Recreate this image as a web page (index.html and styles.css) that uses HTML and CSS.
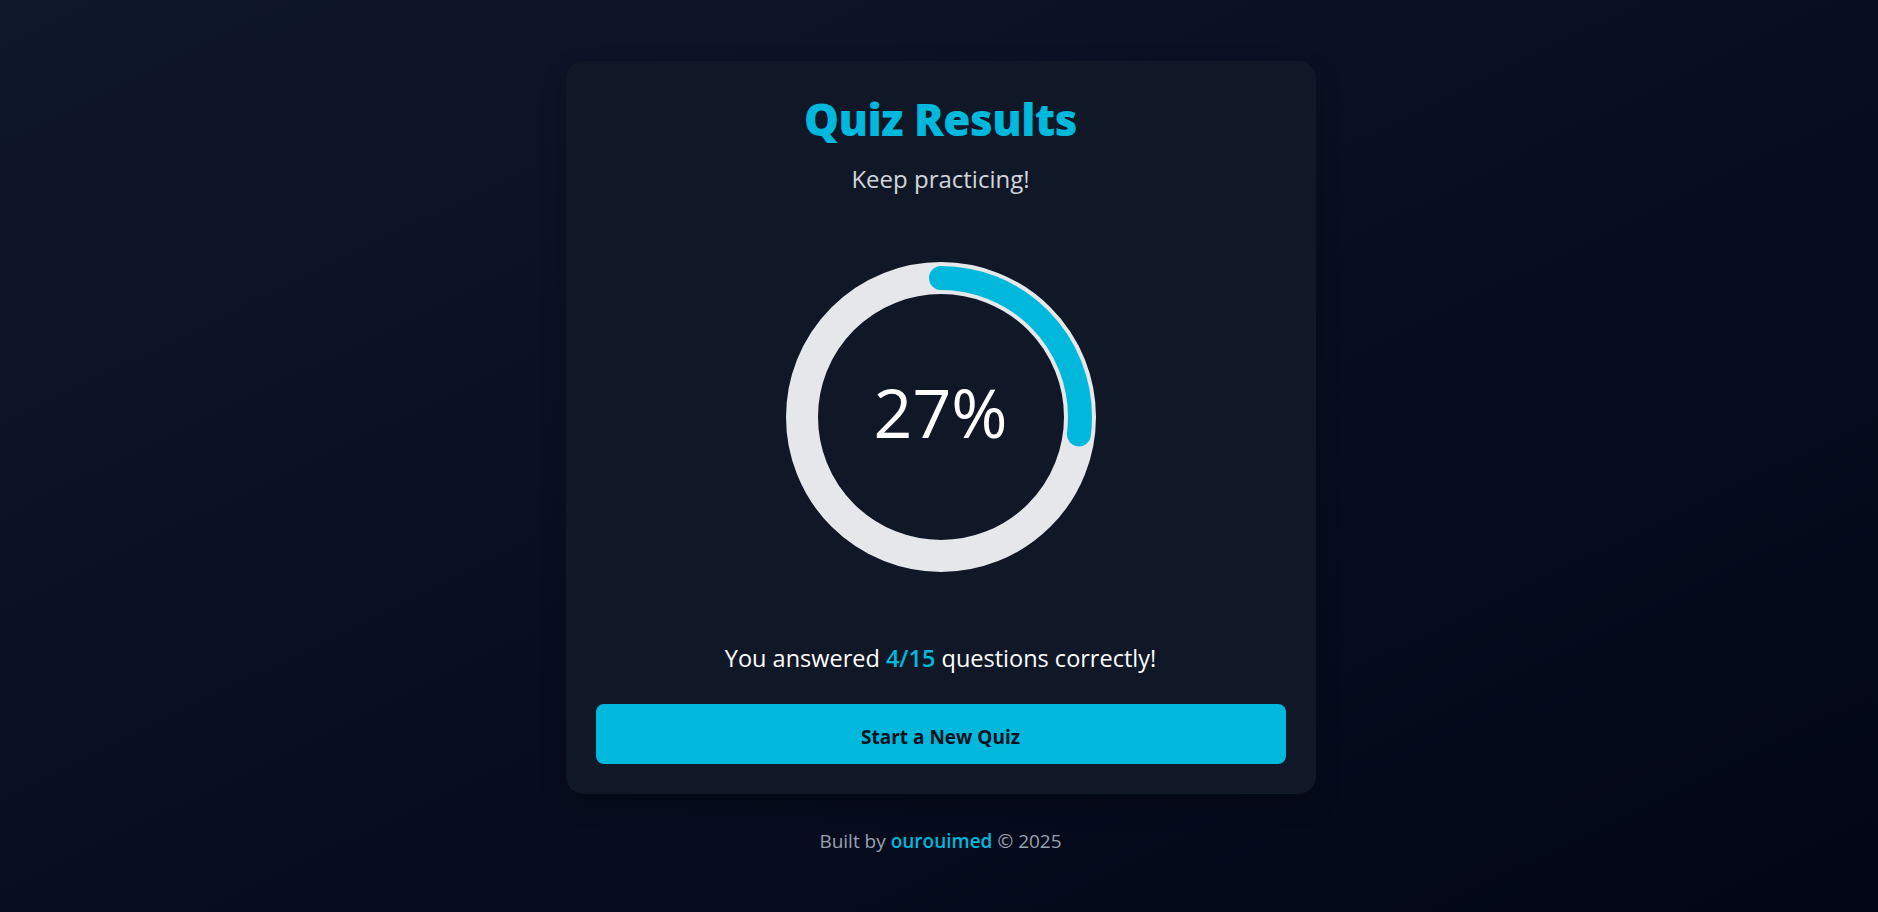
FILE: index.html
```html
<!DOCTYPE html>
<html lang="en">
<head>
<meta charset="utf-8">
<title>Quiz Results</title>
<link rel="stylesheet" href="styles.css">
</head>
<body>
  <main class="page">
    <section class="card">
      <h1 class="title">Quiz Results</h1>
      <p class="subtitle">Keep practicing!</p>
      <div class="ring">
        <svg class="ring-svg" width="310" height="310" viewBox="0 0 310 310">
          <circle class="ring-trail" cx="155" cy="155" r="139"></circle>
          <circle class="ring-path" cx="155" cy="155" r="139" style="stroke-dasharray: 873.36; stroke-dashoffset: 637.55;"></circle>
        </svg>
        <span class="ring-text">27%</span>
      </div>
      <p class="answered">You answered <span class="score">4/15</span> questions correctly!</p>
      <button class="btn">Start a New Quiz</button>
    </section>
    <footer class="footer">Built by <span class="author">ourouimed</span> © 2025</footer>
  </main>
</body>
</html>
```

FILE: styles.css
```css
* { box-sizing: border-box; }
html, body { margin: 0; padding: 0; }
body {
  min-height: 100vh;
  background: linear-gradient(to bottom right, #0f172a, #020617);
  font-family: "Open Sans", "Noto Sans", sans-serif;
}
.page {
  min-height: 100vh;
  display: flex;
  flex-direction: column;
  align-items: center;
  justify-content: center;
  padding-left: 3px;
  padding-top: 4px;
}
.card {
  width: 750px;
  padding: 32px 30px 30px;
  background: #101828;
  border-radius: 18px;
  box-shadow: 0 10px 25px rgba(0, 0, 0, 0.25);
  display: flex;
  flex-direction: column;
  align-items: center;
}
.title {
  margin: 0;
  font-size: 44px;
  line-height: 52px;
  font-weight: 800;
  color: #00b8db;
  letter-spacing: -0.5px;
}
.subtitle {
  margin: 16px 0 0;
  font-size: 24px;
  line-height: 36px;
  color: #d1d5db;
}
.ring {
  position: relative;
  width: 310px;
  height: 310px;
  margin-top: 65px;
}
.ring-svg { display: block; transform: rotate(-90deg); }
.ring-trail { fill: none; stroke: #e5e7eb; stroke-width: 32; }
.ring-path { fill: none; stroke: #00b8db; stroke-width: 24; stroke-linecap: round; }
.ring-text {
  position: absolute;
  inset: 0;
  display: flex;
  align-items: center;
  justify-content: center;
  padding-bottom: 11px;
  color: #ffffff;
  font-size: 68px;
  font-weight: 400;
}
.answered {
  margin: 68px 0 0;
  font-size: 23.5px;
  line-height: 36px;
  color: #ffffff;
}
.score { color: #00b8db; font-weight: 600; }
.btn {
  margin-top: 28px;
  width: 100%;
  height: 60px;
  border: none;
  border-radius: 8px;
  background: #00b8db;
  color: #0b1120;
  font-family: inherit;
  font-size: 19px;
  font-weight: 700;
  padding-top: 6px;
}
.footer {
  margin-top: 33px;
  font-size: 19px;
  line-height: 28px;
  color: #99a1af;
}
.author { color: #00b8db; font-weight: 600; }
```
